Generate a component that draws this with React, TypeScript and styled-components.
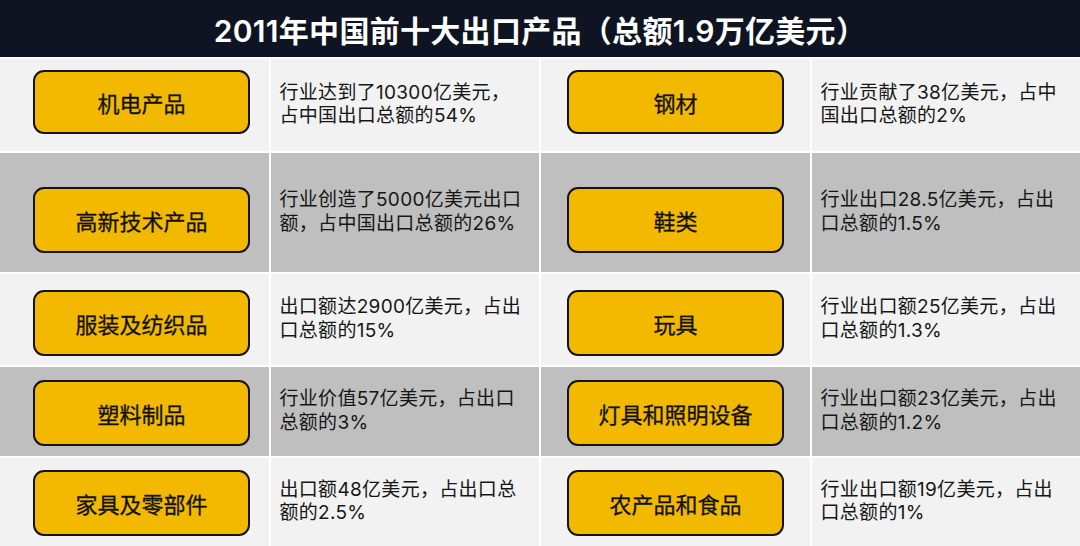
import React from "react";
import styled, { createGlobalStyle } from "styled-components";

const Global = createGlobalStyle`
  html, body { margin: 0; padding: 0; background: #ffffff; }
  body { font-family: Inter, "Noto Sans CJK SC", sans-serif; }
  #root { width: 1080px; height: 546px; overflow: hidden; }
`;

const Page = styled.div`
  width: 1080px;
  height: 546px;
  display: flex;
  flex-direction: column;
  gap: 2px;
  background: #ffffff;
`;

const Header = styled.header`
  height: 57px;
  flex: none;
  background: #0f1423;
  color: #ffffff;
  display: flex;
  align-items: center;
  justify-content: center;
  font-family: Inter, "Noto Sans CJK SC", sans-serif;
  font-size: 30px;
  font-weight: 600;
  letter-spacing: 0.3px;
  box-sizing: border-box;
`;

const Row = styled.div<{ $h: number; $tone: "light" | "dark" }>`
  height: ${(p) => p.$h}px;
  flex: none;
  display: grid;
  grid-template-columns: repeat(4, 1fr);
  column-gap: 2px;
  > div {
    background: ${(p) => (p.$tone === "light" ? "#f2f2f2" : "#bfbfbf")};
  }
`;

const ButtonCell = styled.div<{ $left: number; $nudge: number }>`
  display: flex;
  align-items: center;
  justify-content: flex-start;
  padding-left: ${(p) => p.$left}px;
  padding-top: ${(p) => Math.max(0, p.$nudge * 2)}px;
  padding-bottom: ${(p) => Math.max(0, -p.$nudge * 2)}px;
  box-sizing: border-box;
`;

const Pill = styled.div<{ $h: number }>`
  width: 217px;
  height: ${(p) => p.$h}px;
  box-sizing: border-box;
  background: #f2b900;
  border: 2.5px solid #141414;
  border-radius: 11px;
  display: flex;
  align-items: center;
  justify-content: center;
  font-family: "Noto Sans CJK SC", sans-serif;
  font-size: 22px;
  color: #111111;
  font-weight: 400;
  -webkit-text-stroke: 0.3px #111111;
`;

const TextCell = styled.div`
  display: flex;
  flex-direction: column;
  justify-content: center;
  padding-left: 9px;
  padding-bottom: 2px;
  box-sizing: border-box;
  font-family: Inter, "Noto Sans CJK SC", sans-serif;
  font-size: 19px;
  line-height: 23.5px;
  letter-spacing: 0.3px;
  color: #161616;
  font-weight: 400;
`;

const Line = styled.span`
  white-space: nowrap;
  display: block;
  height: 23.5px;
`;

type Item = { name: string; lines: string[] };
type RowData = { h: number; tone: "light" | "dark"; pill: number; nudge: number; items: [Item, Item] };

const rows: RowData[] = [
  {
    h: 92, tone: "light", pill: 64, nudge: -3,
    items: [
      { name: "机电产品", lines: ["行业达到了10300亿美元，", "占中国出口总额的54%"] },
      { name: "钢材", lines: ["行业贡献了38亿美元，占中", "国出口总额的2%"] },
    ],
  },
  {
    h: 119, tone: "dark", pill: 66, nudge: 7,
    items: [
      { name: "高新技术产品", lines: ["行业创造了5000亿美元出口", "额，占中国出口总额的26%"] },
      { name: "鞋类", lines: ["行业出口28.5亿美元，占出", "口总额的1.5%"] },
    ],
  },
  {
    h: 91, tone: "light", pill: 66, nudge: 3.5,
    items: [
      { name: "服装及纺织品", lines: ["出口额达2900亿美元，占出", "口总额的15%"] },
      { name: "玩具", lines: ["行业出口额25亿美元，占出", "口总额的1.3%"] },
    ],
  },
  {
    h: 89, tone: "dark", pill: 66, nudge: 1.5,
    items: [
      { name: "塑料制品", lines: ["行业价值57亿美元，占出口", "总额的3%"] },
      { name: "灯具和照明设备", lines: ["行业出口额23亿美元，占出", "口总额的1.2%"] },
    ],
  },
  {
    h: 88, tone: "light", pill: 66, nudge: 0.5,
    items: [
      { name: "家具及零部件", lines: ["出口额48亿美元，占出口总", "额的2.5%"] },
      { name: "农产品和食品", lines: ["行业出口额19亿美元，占出", "口总额的1%"] },
    ],
  },
];

export default function App() {
  return (
    <>
      <Global />
      <Page>
        <Header>2011年中国前十大出口产品（总额1.9万亿美元）</Header>
        {rows.map((r, i) => (
          <Row key={i} $h={r.h} $tone={r.tone}>
            {r.items.map((it, j) => (
              <React.Fragment key={j}>
                <ButtonCell $left={j === 0 ? 33 : 26} $nudge={r.nudge}>
                  <Pill $h={r.pill}>{it.name}</Pill>
                </ButtonCell>
                <TextCell>
                  {it.lines.map((l, k) => (
                    <Line key={k}>{l}</Line>
                  ))}
                </TextCell>
              </React.Fragment>
            ))}
          </Row>
        ))}
      </Page>
    </>
  );
}
